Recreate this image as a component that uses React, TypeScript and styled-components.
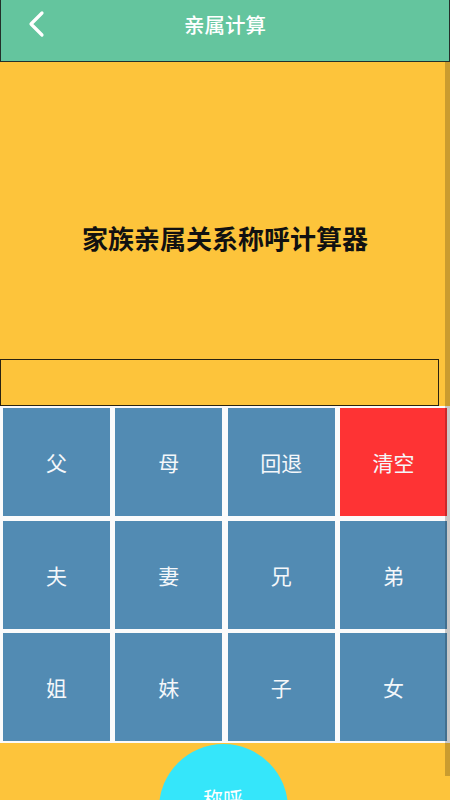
import React from "react";
import styled, { createGlobalStyle } from "styled-components";

const Global = createGlobalStyle`
  html, body { margin: 0; padding: 0; }
  body {
    background: #fdc43b;
    font-family: "Noto Sans CJK SC", "Noto Sans", sans-serif;
  }
  * { box-sizing: border-box; }
`;

const Page = styled.div`
  position: relative;
  width: 450px;
  min-height: 800px;
  height: 800px;
  overflow: hidden;
  background: #fdc43b;
  display: flex;
  flex-direction: column;
`;

const Header = styled.header`
  height: 62px;
  flex: none;
  background: #64c59e;
  border-left: 1.5px solid #23302a;
  border-right: 1.5px solid #23302a;
  border-bottom: 1.5px solid #23302a;
  position: relative;
  display: flex;
  justify-content: center;
  padding-top: 9px;
`;

const BackButton = styled.button`
  position: absolute;
  left: 24px;
  top: 9px;
  width: 24px;
  height: 30px;
  padding: 0;
  border: none;
  background: transparent;
  display: flex;
  align-items: center;
  justify-content: center;
`;

const HeaderTitle = styled.h1`
  margin: 0;
  color: #ffffff;
  font-size: 20.5px;
  font-weight: 500;
  line-height: 30px;
`;

const Banner = styled.section`
  height: 297px;
  flex: none;
  display: flex;
  justify-content: center;
  padding-top: 159px;
`;

const BannerTitle = styled.h2`
  margin: 0;
  color: #111;
  font-size: 26px;
  font-weight: 700;
  line-height: 34px;
`;

const Display = styled.div`
  width: 439px;
  height: 47px;
  flex: none;
  border: 1.5px solid #2a2310;
  background: #fdc43b;
`;

const Keypad = styled.div`
  flex: none;
  background: #fbfbfb;
  display: grid;
  grid-template-columns: repeat(4, 107px);
  grid-auto-rows: 108px;
  column-gap: 5.33px;
  row-gap: 4.5px;
  padding: 2px 3px 2px 3px;
`;

const Key = styled.button<{ $danger?: boolean }>`
  border: none;
  margin: 0;
  padding: 0;
  background: ${(p) => (p.$danger ? "#fe3334" : "#528bb3")};
  color: #f4f7fa;
  font-family: "Noto Sans CJK SC", "Noto Sans", sans-serif;
  font-size: 21px;
  display: flex;
  align-items: center;
  justify-content: center;
`;

const Footer = styled.div`
  flex: 1;
  display: flex;
  justify-content: center;
  padding-top: 1px;
  padding-right: 4px;
`;

const CallButton = styled.button`
  width: 129px;
  height: 129px;
  flex: none;
  border: none;
  border-radius: 50%;
  background: #35e6fa;
  color: #ffffff;
  font-family: "Noto Sans CJK SC", "Noto Sans", sans-serif;
  font-size: 20px;
  line-height: 28px;
  display: flex;
  align-items: flex-start;
  justify-content: center;
  padding-top: 41px;
`;

const ScrollIndicator = styled.div`
  position: absolute;
  right: 0;
  top: 62px;
  width: 5px;
  height: 714px;
  background: rgba(0, 0, 0, 0.2);
  pointer-events: none;
`;

const keys: { label: string; danger?: boolean }[] = [
  { label: "父" },
  { label: "母" },
  { label: "回退" },
  { label: "清空", danger: true },
  { label: "夫" },
  { label: "妻" },
  { label: "兄" },
  { label: "弟" },
  { label: "姐" },
  { label: "妹" },
  { label: "子" },
  { label: "女" },
];

export default function App() {
  return (
    <>
      <Global />
      <Page>
        <Header>
          <BackButton aria-label="返回">
            <svg width="20" height="28" viewBox="0 0 20 28">
              <polyline
                points="15,3 4,14 15,25"
                fill="none"
                stroke="#ffffff"
                strokeWidth="3.2"
                strokeLinecap="round"
                strokeLinejoin="round"
              />
            </svg>
          </BackButton>
          <HeaderTitle>亲属计算</HeaderTitle>
        </Header>
        <Banner>
          <BannerTitle>家族亲属关系称呼计算器</BannerTitle>
        </Banner>
        <Display />
        <Keypad>
          {keys.map((k) => (
            <Key key={k.label} $danger={k.danger}>
              {k.label}
            </Key>
          ))}
        </Keypad>
        <Footer>
          <CallButton>称呼</CallButton>
        </Footer>
        <ScrollIndicator />
      </Page>
    </>
  );
}
